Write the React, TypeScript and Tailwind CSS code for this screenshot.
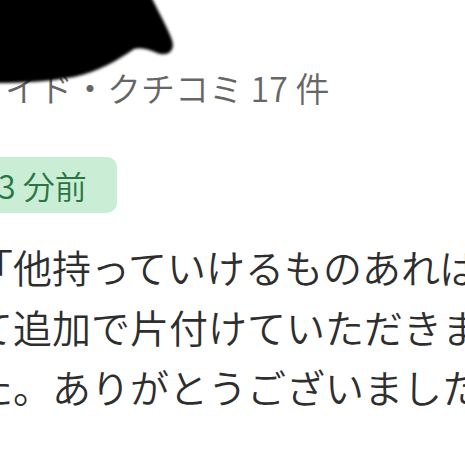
export default function App() {
  return (
    <div className="relative w-[465px] h-[465px] overflow-hidden bg-white font-['Noto_Sans_CJK_JP','Noto_Sans',sans-serif]">
      <div className="flex flex-col items-start pt-[68px] -ml-[26px]">
        <div className="-ml-[3px] text-[34px] leading-[40px] font-[350] text-[#666666] whitespace-nowrap">
          ガイド・クチコミ 17 件
        </div>
        <div className="mt-[49px] h-[56px] flex items-center pl-[24px] pr-[30px] rounded-[10px] bg-[#c9eed5] text-[#2b7545] text-[32px] font-[350] whitespace-nowrap">
          3 分前
        </div>
        <p className="mt-[23px] text-[39px] leading-[60px] font-[350] text-[#2e2e2e] whitespace-nowrap">
          「他持っていけるものあれば言っ
          <br />
          て追加で片付けていただきまし
          <br />
          た。ありがとうございました。
        </p>
      </div>
      <svg
        className="absolute left-0 top-0"
        width="200"
        height="100"
        viewBox="0 0 200 100"
      >
        <defs>
          <filter id="blur" x="-10%" y="-10%" width="120%" height="120%">
            <feGaussianBlur stdDeviation="1.6" />
          </filter>
        </defs>
        <path
          d="M-10,-10 L148,-10 C156,8 167,26 172,40 C176,52 166,57 157,53 C150,50 142,47 134,49 C118,60 98,72 74,77 C46,82 20,83 -10,83 Z"
          fill="#000"
          filter="url(#blur)"
        />
      </svg>
    </div>
  );
}
